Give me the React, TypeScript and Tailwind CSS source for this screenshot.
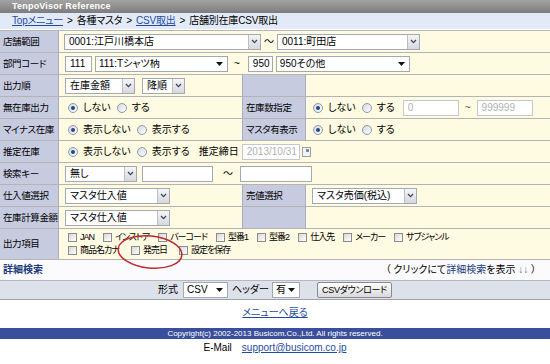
import React from "react";

const Chevron = () => (
  <svg width="7" height="5" viewBox="0 0 7 5">
    <path d="M1 1 L3.5 3.6 L6 1" fill="none" stroke="#3d4558" strokeWidth="1.3" />
  </svg>
);

const Tri = () => (
  <svg width="7" height="4" viewBox="0 0 7 4">
    <path d="M0 0 L7 0 L3.5 4 Z" fill="#111" />
  </svg>
);

function BoxSelect({ className, text }: { className: string; text: string }) {
  return (
    <div className={`flex h-[16px] shrink-0 items-stretch border border-[#a3a9b3] bg-white ${className}`}>
      <span className="flex flex-1 items-center overflow-hidden whitespace-nowrap pl-[4px] text-[10px] leading-none text-black">
        {text}
      </span>
      <span className="flex w-[12px] items-center justify-center border-l border-[#b9bec8] bg-gradient-to-b from-[#f4f5f7] to-[#d5d8de]">
        <Chevron />
      </span>
    </div>
  );
}

function TriSelect({ className, text }: { className: string; text: string }) {
  return (
    <div className={`flex h-[16px] shrink-0 items-center border border-[#a3a9b3] bg-white pr-[4px] ${className}`}>
      <span className="flex flex-1 items-center overflow-hidden whitespace-nowrap pl-[3px] text-[10px] leading-none text-black">
        {text}
      </span>
      <Tri />
    </div>
  );
}

function Input({ className, text, disabled }: { className: string; text?: string; disabled?: boolean }) {
  return (
    <div
      className={`flex h-[16px] shrink-0 items-center border bg-white pl-[4px] text-[10px] leading-none ${
        disabled ? "border-[#c4c8ce] text-[#b0b0b0]" : "border-[#a3a9b3] text-black"
      } ${className}`}
    >
      {text}
    </div>
  );
}

const Radio = ({ on }: { on?: boolean }) => (
  <span className="flex h-[10px] w-[10px] shrink-0 items-center justify-center rounded-full border border-[#8f99ab] bg-gradient-to-br from-[#d3d8e0] to-white">
    {on && <span className="h-[4px] w-[4px] rounded-full bg-[#24468c]" />}
  </span>
);

function RadioPair({ a, b }: { a: string; b: string }) {
  return (
    <div className="flex items-center text-[10px] leading-none">
      <Radio on />
      <span className="ml-[5px]">{a}</span>
      <span className="ml-[6px]">
        <Radio />
      </span>
      <span className="ml-[5px]">{b}</span>
    </div>
  );
}

const Check = ({ label }: { label: string }) => (
  <div className="flex items-center gap-[3px] text-[9px] leading-none tracking-[-1px]">
    <span className="h-[9px] w-[9px] shrink-0 border border-[#8c8c8c] bg-gradient-to-br from-[#d8d8d8] to-white" />
    <span>{label}</span>
  </div>
);

const LBL =
  "flex w-[59px] shrink-0 items-center border-r border-[#a9adc0] bg-[#c7cbe0] pl-[3px] text-[9.5px] tracking-[-0.4px] leading-none whitespace-nowrap overflow-hidden";
const RLBL =
  "flex w-[64px] shrink-0 items-center border-x border-[#a9adc0] bg-[#c7cbe0] pl-[3px] text-[9.5px] tracking-[-0.4px] leading-none whitespace-nowrap overflow-hidden";
const VAL = "flex items-center bg-[#fffbe2] text-[10px] leading-none";
const ROW = "flex h-[22px] border-b border-[#b4b4b4]";

export default function App() {
  return (
    <div className="relative h-[364px] w-[550px] overflow-hidden bg-white font-['Liberation_Sans','Noto_Sans_CJK_JP',sans-serif] text-black [font-feature-settings:'palt']">
      {/* header */}
      <div className="flex h-[13px] items-center bg-gradient-to-b from-[#a4a4a4] to-[#7c7c7c] pl-[12px] text-[9px] font-bold leading-none tracking-[0.2px] text-white">
        TenpoVisor Reference
      </div>
      {/* breadcrumb */}
      <div className="flex h-[16px] items-center bg-[#e2eaf7] pl-[12px] text-[10px] leading-none tracking-[-0.2px]">
        <span className="text-[#1f4ca3] underline">Topメニュー</span>
        <span className="mx-[4px]">&gt;</span>
        <span>各種マスタ</span>
        <span className="mx-[4px]">&gt;</span>
        <span className="text-[#1f4ca3] underline">CSV取出</span>
        <span className="mx-[4px]">&gt;</span>
        <span>店舗別在庫CSV取出</span>
      </div>

      {/* form table */}
      <div className="mt-[1px] border-t border-[#b4b4b4]">
        {/* 店舗範囲 */}
        <div className={ROW}>
          <div className={LBL}>店舗範囲</div>
          <div className={`${VAL} flex-1 pl-[5px]`}>
            <BoxSelect className="w-[197px]" text="0001:江戸川橋本店" />
            <span className="mx-[3px]">〜</span>
            <BoxSelect className="w-[143px]" text="0011:町田店" />
          </div>
        </div>
        {/* 部門コード */}
        <div className={ROW}>
          <div className={LBL}>部門コード</div>
          <div className={`${VAL} flex-1 pl-[6px]`}>
            <Input className="w-[27px]" text="111" />
            <TriSelect className="ml-[3px] w-[133px]" text="111:Tシャツ柄" />
            <span className="ml-[6px] mr-[8px]">~</span>
            <Input className="w-[25px]" text="950" />
            <TriSelect className="ml-[3px] w-[134px]" text="950その他" />
          </div>
        </div>
        {/* 出力順 */}
        <div className={ROW}>
          <div className={LBL}>出力順</div>
          <div className={`${VAL} w-[183px] shrink-0 pl-[6px]`}>
            <BoxSelect className="w-[70px]" text="在庫金額" />
            <BoxSelect className="ml-[7px] w-[43px]" text="降順" />
          </div>
          <div className={RLBL}></div>
          <div className={`${VAL} flex-1`}></div>
        </div>
        {/* 無在庫出力 */}
        <div className={ROW}>
          <div className={LBL}>無在庫出力</div>
          <div className={`${VAL} w-[183px] shrink-0 pl-[9px]`}>
            <RadioPair a="しない" b="する" />
          </div>
          <div className={RLBL}>在庫数指定</div>
          <div className={`${VAL} flex-1 pl-[7px]`}>
            <RadioPair a="しない" b="する" />
            <Input className="ml-[8px] w-[56px]" text="0" disabled />
            <span className="mx-[6px] text-[#555]">~</span>
            <Input className="w-[56px]" text="999999" disabled />
          </div>
        </div>
        {/* マイナス在庫 */}
        <div className={ROW}>
          <div className={LBL}>マイナス在庫</div>
          <div className={`${VAL} w-[183px] shrink-0 pl-[9px]`}>
            <RadioPair a="表示しない" b="表示する" />
          </div>
          <div className={RLBL}>マスタ有表示</div>
          <div className={`${VAL} flex-1 pl-[7px]`}>
            <RadioPair a="しない" b="する" />
          </div>
        </div>
        {/* 推定在庫 */}
        <div className={ROW}>
          <div className={LBL}>推定在庫</div>
          <div className={`${VAL} flex-1 pl-[9px]`}>
            <RadioPair a="表示しない" b="表示する" />
            <span className="ml-[9px]">推定締日</span>
            <Input className="ml-[3px] w-[58px]" text="2013/10/31" disabled />
            <span className="ml-[2px] flex h-[10px] w-[9px] items-start justify-end border border-[#9aa1ad] bg-[#f3f3f3]">
              <span className="mr-[1px] mt-[1px] h-[3px] w-[3px] bg-[#7f8899]" />
            </span>
          </div>
        </div>
        {/* 検索キー */}
        <div className={ROW}>
          <div className={LBL}>検索キー</div>
          <div className={`${VAL} flex-1 pl-[6px]`}>
            <BoxSelect className="w-[72px]" text="無し" />
            <Input className="ml-[5px] w-[71px]" />
            <span className="ml-[10px] mr-[7px]">～</span>
            <Input className="w-[72px]" />
          </div>
        </div>
        {/* 仕入値選択 */}
        <div className={ROW}>
          <div className={LBL}>仕入値選択</div>
          <div className={`${VAL} w-[183px] shrink-0 pl-[6px]`}>
            <BoxSelect className="w-[105px]" text="マスタ仕入値" />
          </div>
          <div className={RLBL}>売値選択</div>
          <div className={`${VAL} flex-1 pl-[6px]`}>
            <BoxSelect className="w-[105px]" text="マスタ売価(税込)" />
          </div>
        </div>
        {/* 在庫計算金額 */}
        <div className={ROW}>
          <div className={LBL}>在庫計算金額</div>
          <div className={`${VAL} w-[183px] shrink-0 pl-[6px]`}>
            <BoxSelect className="w-[105px]" text="マスタ仕入値" />
          </div>
          <div className={RLBL}></div>
          <div className={`${VAL} flex-1`}></div>
        </div>
        {/* 出力項目 */}
        <div className="flex h-[31px] border-b border-[#b4b4b4]">
          <div className={LBL}>出力項目</div>
          <div className="flex flex-1 flex-col justify-center gap-[4px] bg-[#fffbe2] pl-[9px]">
            <div className="flex items-center gap-[9px]">
              <Check label="JAN" />
              <Check label="インストア" />
              <Check label="バーコード" />
              <Check label="型番1" />
              <Check label="型番2" />
              <Check label="仕入先" />
              <Check label="メーカー" />
              <Check label="サブジャンル" />
            </div>
            <div className="flex items-center gap-[12px]">
              <Check label="商品名カナ" />
              <Check label="発売日" />
              <Check label="設定を保存" />
            </div>
          </div>
        </div>
        {/* 詳細検索 */}
        <div className="flex h-[21px] items-center justify-between border-b border-[#b4b8c4] bg-[#fbfbfd] pl-[3px] pr-[14px] text-[10px] leading-none">
          <span className="font-bold text-[#1c3a78]">詳細検索</span>
          <span>
            （ クリックにて<span className="text-[#1c3a78]">詳細検索</span>を表示{" "}
            <span className="text-[#5a6a90]">↓↓</span> ）
          </span>
        </div>
        {/* 形式 */}
        <div className="flex h-[19px] items-center justify-center border-b border-[#9aa0ad] bg-[#dde1ea] text-[10px] leading-none">
          <span>形式</span>
          <TriSelect className="ml-[5px] w-[45px]" text="CSV" />
          <span className="ml-[4px]">ヘッダー</span>
          <TriSelect className="ml-[3px] w-[28px]" text="有" />
          <div className="ml-[17px] flex h-[16px] w-[75px] items-center justify-center whitespace-nowrap rounded-[2px] border border-[#8a8a8a] bg-gradient-to-b from-white to-[#d9d9d9] text-[9px] tracking-[-0.3px]">
            CSVダウンロード
          </div>
        </div>
      </div>

      {/* footer */}
      <div className="mt-[6px] flex h-[14px] items-center justify-center text-[10px] leading-none">
        <span className="text-[#1f4ca3] underline">メニューへ戻る</span>
      </div>
      <div className="mt-[8px] flex h-[11px] items-center justify-center bg-[#3a4f9c] text-[8px] leading-none text-white">
        Copyright(c) 2002-2013 Busicom.Co.,Ltd. All rights reserved.
      </div>
      <div className="mt-[2px] flex h-[14px] items-center justify-center text-[10px] leading-none">
        <span>E-Mail</span>
        <span className="ml-[10px] text-[#1f4ca3] underline">support@busicom.co.jp</span>
      </div>

      {/* red annotation ellipse */}
      <svg className="absolute left-[114px] top-[232px]" width="72" height="40" viewBox="0 0 72 40">
        <ellipse
          cx="36"
          cy="20"
          rx="32"
          ry="16"
          transform="rotate(6 36 20)"
          fill="none"
          stroke="#c0272d"
          strokeWidth="1.5"
        />
      </svg>
    </div>
  );
}
